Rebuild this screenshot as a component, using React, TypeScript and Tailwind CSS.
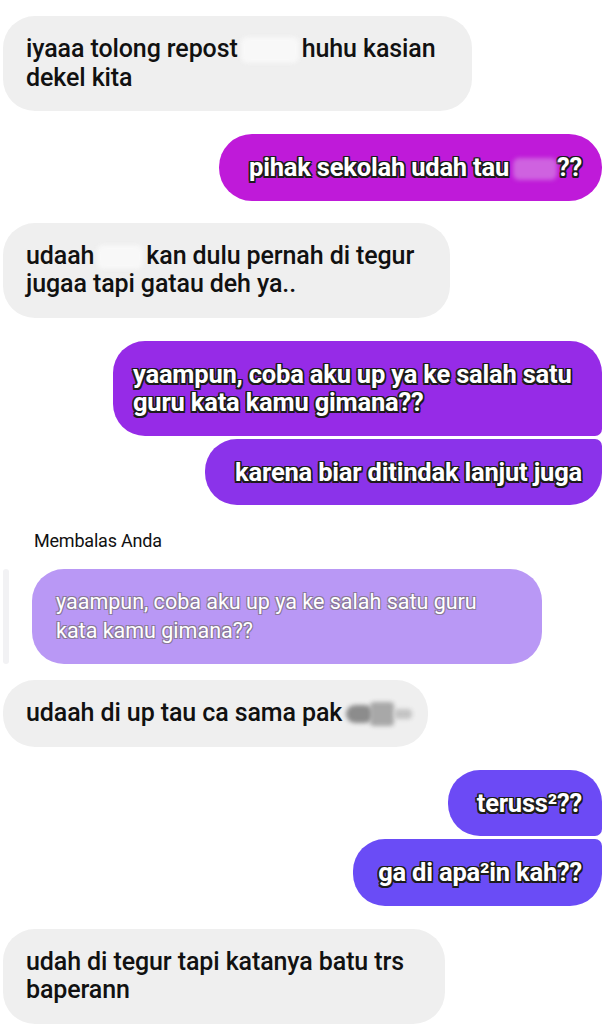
import React from "react";

const outline =
  "[text-shadow:-1.5px_-1.5px_0_#1c1c1c,1.5px_-1.5px_0_#1c1c1c,-1.5px_1.5px_0_#1c1c1c,1.5px_1.5px_0_#1c1c1c,0_1.5px_0_#1c1c1c,0_-1.5px_0_#1c1c1c,1.5px_0_0_#1c1c1c,-1.5px_0_0_#1c1c1c]";

function Blur({ className }: { className: string }) {
  return <span className={`inline-block align-middle blur-[2px] ${className}`} />;
}

function Theirs({ children, className = "" }: { children: React.ReactNode; className?: string }) {
  return (
    <div
      className={`self-start ml-[3px] rounded-[32px] bg-[#efefef] px-[23px] py-[19px] text-[25px] leading-[28.5px] font-medium tracking-[-0.1px] whitespace-nowrap text-[#111] ${className}`}
    >
      {children}
    </div>
  );
}

function Mine({
  children,
  color,
  className = "",
}: {
  children: React.ReactNode;
  color: string;
  className?: string;
}) {
  return (
    <div
      className={`self-end mr-[14px] px-[20px] py-[19px] text-[25.5px] leading-[28.5px] font-bold tracking-[-0.2px] whitespace-nowrap text-white ${outline} ${color} ${className}`}
    >
      {children}
    </div>
  );
}

export default function App() {
  return (
    <div className="w-[616px] h-[1032px] bg-white overflow-hidden font-['Roboto',sans-serif] flex flex-col pt-[16px]">
      <Theirs className="w-[469px]">
        iyaaa tolong repost
        <Blur className="w-[58px] h-[26px] mx-[3px] bg-[#f8f8f8] rounded-md" />
        huhu kasian
        <br />
        dekel kita
      </Theirs>

      <Mine color="bg-[#bf1ad9]" className="mt-[23px] rounded-[33px] w-[383px] text-right">
        pihak sekolah udah tau
        <Blur className="w-[44px] h-[22px] ml-[4px] bg-[#cf62e0] rounded-md" />
        ??
      </Mine>

      <Theirs className="mt-[22px] w-[447px]">
        udaah
        <Blur className="w-[46px] h-[24px] mx-[3px] bg-[#f8f8f8] rounded-md" />
        kan dulu pernah di tegur
        <br />
        jugaa tapi gatau deh ya..
      </Theirs>

      <Mine color="bg-[#962be7]" className="mt-[23px] w-[489px] rounded-[32px] rounded-br-[7px]">
        yaampun, coba aku up ya ke salah satu
        <br />
        guru kata kamu gimana??
      </Mine>

      <Mine color="bg-[#8b33ea]" className="mt-[3px] w-[397px] rounded-[32px] rounded-tr-[7px] text-right">
        karena biar ditindak lanjut juga
      </Mine>

      <div className="mt-[25px] ml-[34px] text-[18px] leading-[22px] text-[#111] tracking-[-0.2px]">
        Membalas Anda
      </div>

      <div className="mt-[17px] flex items-stretch">
        <div className="ml-[3px] w-[6px] rounded-full bg-[#f2f2f4]" />
        <div className="ml-[23px] w-[510px] rounded-[32px] bg-[#b998f5] px-[24px] py-[19px] text-[21.5px] leading-[28.5px] text-white [text-shadow:-1px_-1px_0_#8a7a9a,1px_-1px_0_#8a7a9a,-1px_1px_0_#8a7a9a,1px_1px_0_#8a7a9a]">
          yaampun, coba aku up ya ke salah satu guru
          <br />
          kata kamu gimana??
        </div>
      </div>

      <Theirs className="mt-[16px] w-[425px]">
        udaah di up tau ca sama pak
        <span className="inline-flex items-center align-middle ml-[4px]">
          <Blur className="w-[28px] h-[18px] bg-[#8c8c8c] rounded-full" />
          <Blur className="w-[24px] h-[24px] bg-[#a8a8a8] rounded-sm -ml-[4px]" />
          <Blur className="w-[18px] h-[10px] bg-[#c4c4c4] rounded-sm" />
        </span>
      </Theirs>

      <Mine color="bg-[#6c4af5]" className="mt-[23px] w-[154px] rounded-[32px] rounded-br-[7px] text-right">
        teruss²??
      </Mine>

      <Mine color="bg-[#6a4cf6]" className="mt-[3px] w-[249px] rounded-[32px] rounded-tr-[7px] text-right">
        ga di apa²in kah??
      </Mine>

      <Theirs className="mt-[23px] w-[442px]">
        udah di tegur tapi katanya batu trs
        <br />
        baperann
      </Theirs>
    </div>
  );
}
